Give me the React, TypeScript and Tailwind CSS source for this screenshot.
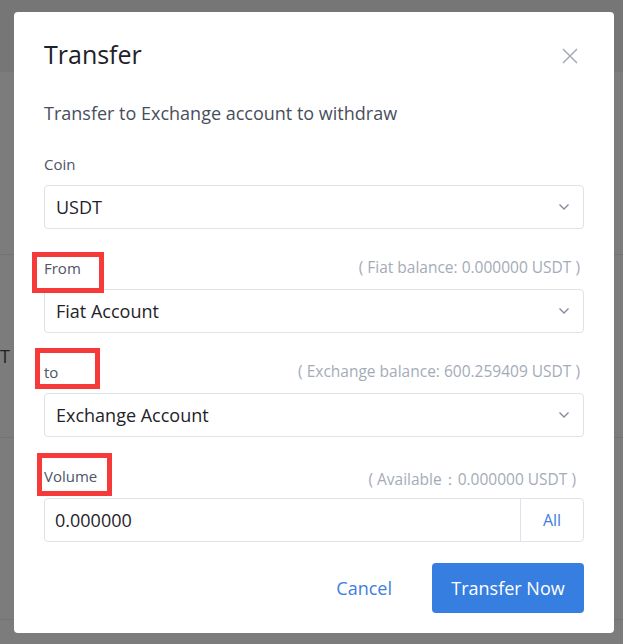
import React from "react";

const Chevron = () => (
  <svg width="12" height="8" viewBox="0 0 12 8" fill="none" className="text-[#858c9b]">
    <path d="M1.5 1.5 L6 6 L10.5 1.5" stroke="currentColor" strokeWidth="1.4" />
  </svg>
);

const Mark = ({ className }: { className: string }) => (
  <span className={"pointer-events-none absolute border-[5px] border-[#f63a3a] " + className} />
);

const Select = ({ value }: { value: string }) => (
  <div className="flex h-[44px] items-center justify-between rounded-[4px] border border-[#dfe2e8] pl-[11px] pr-[13px]">
    <span className="text-[18px] text-[#1f2329]">{value}</span>
    <Chevron />
  </div>
);

const App = () => {
  return (
    <div className="relative h-[644px] w-[623px] overflow-hidden bg-[#7c7c7c] font-['Open_Sans',sans-serif]">
      {/* dimmed page underneath */}
      <div className="flex h-full flex-col">
        <div className="h-[72px] bg-[#767676]" />
        <div className="h-[183px] border-b border-[#737373]" />
        <div className="flex h-[183px] items-start border-b border-[#737373] pt-[92px]">
          <span className="text-[18px] leading-none text-[#1f2329]">T</span>
        </div>
        <div className="h-[182px] border-b border-[#737373]" />
      </div>

      <div className="absolute left-[14px] top-[12px] w-[600px] rounded-[4px] bg-white px-[30px] pb-[20px] pt-[26px]">
        <div className="flex items-center justify-between">
          <h2 className="text-[25px] leading-[32px] text-[#1d2129]">Transfer</h2>
          <svg width="18" height="18" viewBox="0 0 18 18" className="mr-[5px] mt-[4px] text-[#a3aab8]">
            <path d="M2 2 L16 16 M16 2 L2 16" stroke="currentColor" strokeWidth="1.5" />
          </svg>
        </div>

        <p className="mt-[30px] text-[18px] leading-[26px] text-[#474e5c]">
          Transfer to Exchange account to withdraw
        </p>

        <div className="mt-[28px] text-[15px] leading-[20px] text-[#4d5566]">Coin</div>
        <div className="mt-[11px]">
          <Select value="USDT" />
        </div>

        <div className="mt-[29px] flex h-[20px] items-center justify-between">
          <span className="relative text-[15px] leading-[20px] text-[#4d5566]">
            From
            <Mark className="-left-[12px] -top-[6px] h-[41px] w-[72px]" />
          </span>
          <span className="pr-[4px] text-[15.5px] text-[#a4abb8]">( Fiat balance: 0.000000 USDT )</span>
        </div>
        <div className="mt-[11px]">
          <Select value="Fiat Account" />
        </div>

        <div className="mt-[29px] flex h-[20px] items-center justify-between">
          <span className="relative text-[15px] leading-[20px] text-[#4d5566]">
            to
            <Mark className="-left-[9px] -top-[14px] h-[41px] w-[65px]" />
          </span>
          <span className="pr-[4px] text-[15.5px] text-[#a4abb8]">( Exchange balance: 600.259409 USDT )</span>
        </div>
        <div className="mt-[11px]">
          <Select value="Exchange Account" />
        </div>

        <div className="mt-[29px] flex h-[20px] items-center justify-between">
          <span className="relative text-[15px] leading-[20px] text-[#4d5566]">
            Volume
            <Mark className="-left-[7px] -top-[13px] h-[43px] w-[75px]" />
          </span>
          <span className="mt-[8px] pr-[8px] text-[15.5px] text-[#a4abb8]">( Available：0.000000 USDT )</span>
        </div>
        <div className="mt-[12px] flex h-[44px] rounded-[4px] border border-[#dfe2e8]">
          <div className="flex flex-1 items-center pl-[10px] text-[18px] text-[#1f2329]">0.000000</div>
          <div className="flex w-[63px] items-center justify-center border-l border-[#dfe2e8] text-[16px] text-[#3e7ee0]">
            All
          </div>
        </div>

        <div className="mt-[21px] flex items-center justify-end gap-[40px]">
          <button className="text-[18px] text-[#3e7ee0]">Cancel</button>
          <button className="h-[50px] w-[152px] rounded-[4px] bg-[#367ee0] text-[18px] text-white">
            Transfer Now
          </button>
        </div>
      </div>
    </div>
  );
};

export default App;
